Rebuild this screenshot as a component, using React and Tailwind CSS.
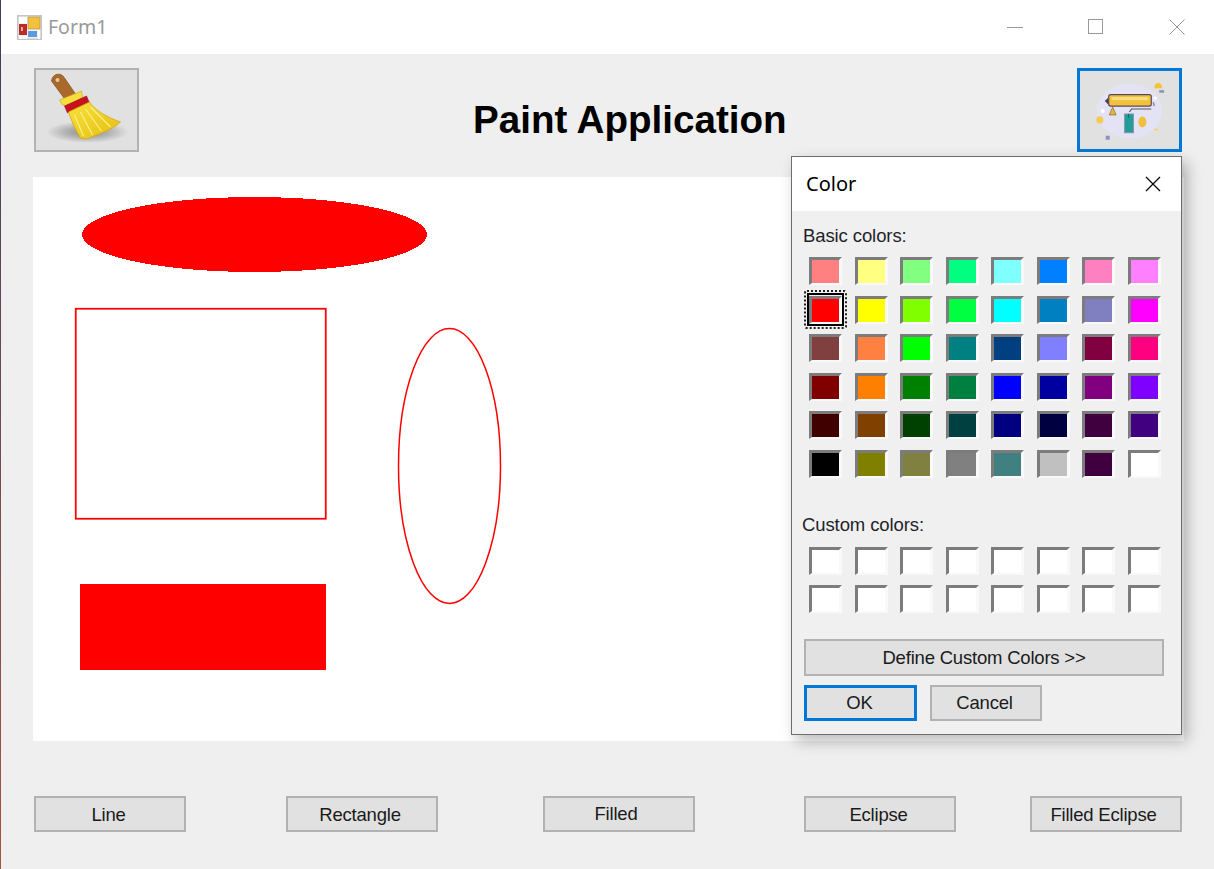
import { useState } from 'react';

const sans = 'font-["Liberation_Sans",Arial,sans-serif]';

const basicColors = [
    '#ff8080', '#ffff80', '#80ff80', '#00ff80', '#80ffff', '#0080ff', '#ff80c0', '#ff80ff',
    '#ff0000', '#ffff00', '#80ff00', '#00ff40', '#00ffff', '#0080c0', '#8080c0', '#ff00ff',
    '#804040', '#ff8040', '#00ff00', '#008080', '#004080', '#8080ff', '#800040', '#ff0080',
    '#800000', '#ff8000', '#008000', '#008040', '#0000ff', '#0000a0', '#800080', '#8000ff',
    '#400000', '#804000', '#004000', '#004040', '#000080', '#000040', '#400040', '#400080',
    '#000000', '#808000', '#808040', '#808080', '#408080', '#c0c0c0', '#400040', '#ffffff',
];

const toolButtons = [
    { label: 'Line', className: 'ml-[1px] pr-[3px] pt-[2px]' },
    { label: 'Rectangle', className: 'ml-[100px] pr-[4px] pt-[2px]' },
    { label: 'Filled', className: 'ml-[105px] pr-[6px] pb-[1px]' },
    { label: 'Eclipse', className: 'ml-[109px] pr-[3px] pt-[2px]' },
    { label: 'Filled Eclipse', className: 'ml-[74px] pr-[5px] pt-[2px]' },
];

const FormIcon = () => (
    <svg width="25" height="25" viewBox="0 0 25 25" className="blur-[0.4px]">
        <rect x="0.75" y="0.75" width="23.5" height="23.5" fill="#f4f4f4" stroke="#c4c4c4" strokeWidth="1.5" />
        <rect x="2" y="2" width="8" height="6" fill="#ffffff" />
        <rect x="11" y="2" width="12" height="12" fill="#f2c23e" stroke="#a88a3a" strokeWidth="0.6" />
        <rect x="2" y="9" width="8" height="11" fill="#bd2b25" />
        <rect x="4" y="12" width="2" height="4" fill="#e9a9a0" />
        <rect x="11" y="16" width="9" height="6" fill="#5c9be2" />
        <rect x="2" y="21" width="3" height="3" fill="#ffffff" />
        <rect x="6" y="21" width="4" height="3" fill="#ffffff" />
        <rect x="21" y="16" width="2" height="8" fill="#ffffff" />
    </svg>
);

const BroomIcon = () => (
    <svg width="101" height="80" viewBox="0 0 100 80" className="blur-[0.5px]">
        <defs>
            <radialGradient id="broomShadow">
                <stop offset="0%" stopColor="#8a8a8a" />
                <stop offset="55%" stopColor="#b4b4b4" />
                <stop offset="100%" stopColor="#e1e1e1" />
            </radialGradient>
            <linearGradient id="broomStraw" x1="0" y1="0" x2="1" y2="1">
                <stop offset="0%" stopColor="#f8e23c" />
                <stop offset="100%" stopColor="#e5bd12" />
            </linearGradient>
        </defs>
        <ellipse cx="51" cy="62" rx="41" ry="11" fill="url(#broomShadow)" />
        <path d="M15 11 C16 3 25 2 28 8 L39 24 L29 30 Z" fill="#a9692a" stroke="#8a5420" strokeWidth="0.8" />
        <circle cx="21" cy="10" r="2" fill="#e6c9a0" />
        <path d="M23 30 L45 21 L46 27 L41 31 L31 36 L26 35 Z" fill="#f5df3e" stroke="#c9a516" strokeWidth="0.6" />
        <path d="M28 36 L50 26 L53 33 L31 43 Z" fill="#c8121e" stroke="#97101a" strokeWidth="0.6" />
        <path d="M32 42 L53 32 C58 40 70 47 84 52 C76 60 62 64 50 69 L44 68 C39 60 35 51 32 42 Z" fill="url(#broomStraw)" stroke="#d0a813" strokeWidth="0.8" />
        <path d="M38 45 L47 66 M44 42 L56 65 M49 39 L65 61 M54 37 L74 57" stroke="#fbf08a" strokeWidth="1.2" fill="none" />
    </svg>
);

const RollerIcon = () => (
    <svg width="100" height="80" viewBox="0 0 100 80" className="blur-[0.5px]">
        <ellipse cx="50" cy="41" rx="33" ry="27.5" fill="#e3e3f5" />
        <path d="M25 31 L29 27 L29 35 Z" fill="#4e4048" />
        <rect x="29" y="24.5" width="43" height="11.5" rx="2" fill="#f2c23e" stroke="#5a4a50" strokeWidth="1.2" />
        <rect x="32" y="27" width="37" height="3" fill="#f9dd84" />
        <path d="M74 32 L75 36" stroke="#8f8a9a" strokeWidth="1.5" />
        <path d="M72 39 L52 39 L50 42" stroke="#5a5560" strokeWidth="1.2" fill="none" />
        <rect x="45" y="44" width="9" height="19" fill="#1f9e98" stroke="#8f93a6" strokeWidth="1" />
        <path d="M49 44 L49 48" stroke="#0f6d68" strokeWidth="1" />
        <path d="M33 37 L36.5 45 L29.5 45 Z" fill="#e8b53a" stroke="#6d5a3c" strokeWidth="0.6" />
        <ellipse cx="63" cy="52" rx="4" ry="5.5" fill="#f0bf3c" />
        <circle cx="20" cy="50" r="3.6" fill="#f5ca55" />
        <path d="M75 18 C75 11 83 11 83 18 Z" fill="#f3c434" />
        <rect x="80" y="20" width="5" height="2.5" fill="#8f8fb8" />
        <rect x="26" y="66" width="4" height="4" fill="#8f8fc4" />
        <rect x="75" y="59" width="4" height="1.6" fill="#f5d36a" />
        <circle cx="23" cy="41" r="2" fill="#ffffff" />
        <circle cx="76" cy="28" r="1.6" fill="#ffffff" />
    </svg>
);

const Swatch = ({ color, selected }) => (
    <div className="relative w-[33px] h-[28px]">
        <div
            className="w-full h-full box-border border-solid border-t-[3px] border-l-[3px] border-r-[3px] border-b-[2px] border-t-[#7c7c7c] border-l-[#7c7c7c] border-r-[#f9f9f9] border-b-[#f9f9f9]"
            style={{ backgroundColor: color }}
        />
        {selected && (
            <>
                <div className="absolute -left-[2px] -top-[3px] -right-[2px] -bottom-[2px] border-2 border-black" />
                <div className="absolute -left-[5px] -top-[6px] -right-[5px] -bottom-[5px] border-2 border-dotted border-[#222222] rounded-[3px]" />
            </>
        )}
    </div>
);

const WinButton = ({ children, className = '', focused = false }) => (
    <button
        className={`flex items-center justify-center bg-[#e1e1e1] text-[18.5px] text-[#1a1a1a] tracking-[-0.2px] ${sans} ${
            focused ? 'border-[3px] border-[#0078d7]' : 'border-2 border-[#b2b2b2]'
        } ${className}`}
    >
        {children}
    </button>
);

const ColorDialog = () => (
    <div className="absolute left-[791px] top-[156px] w-[391px] h-[579px] flex flex-col bg-[#f0f0f0] border border-[#6e6e6e] shadow-[5px_6px_14px_rgba(0,0,0,0.28)]">
        <div className="h-[54px] shrink-0 bg-white flex items-center justify-between pl-[14px] pr-[20px]">
            <span className='text-[20px] text-black font-["Noto_Sans",sans-serif]'>Color</span>
            <svg width="16" height="16" viewBox="0 0 16 16" stroke="#000" strokeWidth="1.2" fill="none">
                <path d="M1 1 L15 15 M15 1 L1 15" />
            </svg>
        </div>

        <div className="flex-1 flex flex-col pl-[11px]">
            <p className={`mt-[14px] h-[21px] leading-[21px] text-[18.5px] text-[#1f1f2a] tracking-[-0.1px] ${sans}`}>Basic colors:</p>
            <div className="mt-[11px] ml-[6px] grid grid-cols-[repeat(8,33px)] gap-x-[12.5px] gap-y-[10.5px]">
                {basicColors.map((color, i) => (
                    <Swatch key={i} color={color} selected={i === 8} />
                ))}
            </div>

            <p className={`mt-[36px] -ml-[1px] h-[21px] leading-[21px] text-[18.5px] text-[#1f1f2a] tracking-[-0.1px] ${sans}`}>Custom colors:</p>
            <div className="mt-[12px] ml-[6px] grid grid-cols-[repeat(8,33px)] gap-x-[12.5px] gap-y-[10px]">
                {Array.from({ length: 16 }).map((_, i) => (
                    <Swatch key={i} color="#ffffff" />
                ))}
            </div>

            <WinButton className="mt-[26px] ml-[1px] w-[360px] h-[37px] pt-[2px]">Define Custom Colors &gt;&gt;</WinButton>
            <div className="mt-[9px] ml-[1px] flex gap-[13px]">
                <WinButton focused className="w-[113px] h-[36px] pr-[2px] pt-[1px]">OK</WinButton>
                <WinButton className="w-[112px] h-[36px] pr-[3px] pt-[1px]">Cancel</WinButton>
            </div>
        </div>
    </div>
);

const App = () => {
    const [brushColor] = useState('#ff0000');

    return (
        <div className="relative w-[1214px] h-[869px] overflow-hidden flex bg-[#efefef]">
            {/* window edge */}
            <div className="w-px shrink-0 bg-linear-to-b from-[#3b3d5e] to-[#a5533f]" />

            <div className="flex-1 flex flex-col">
                {/* title bar */}
                <div className="h-[54px] shrink-0 bg-white flex items-center pl-[16px]">
                    <FormIcon />
                    <span className='ml-[6px] text-[19.5px] text-[#999999] font-["Noto_Sans",sans-serif]'>Form1</span>
                    <div className="ml-auto flex items-center">
                        <svg width="16" height="16" viewBox="0 0 16 16" stroke="#999999" fill="none" className="mr-[65px]">
                            <path d="M0 8.5 H16" />
                        </svg>
                        <svg width="16" height="16" viewBox="0 0 16 16" stroke="#999999" fill="none" className="mr-[65px]">
                            <rect x="0.5" y="0.5" width="14" height="14" />
                        </svg>
                        <svg width="16" height="16" viewBox="0 0 16 16" stroke="#999999" fill="none" className="mr-[29px]">
                            <path d="M0.5 0.5 L15.5 15.5 M15.5 0.5 L0.5 15.5" />
                        </svg>
                    </div>
                </div>

                {/* toolbar */}
                <div className="mt-[14px] flex items-center pl-[33px] pr-[32px]">
                    <button className="w-[105px] h-[84px] flex items-center justify-center bg-[#e1e1e1] border-2 border-[#b2b2b2]">
                        <BroomIcon />
                    </button>
                    <h1 className={`ml-[334px] mt-[20px] text-[38.6px] leading-none font-bold text-black whitespace-nowrap ${sans}`}>Paint Application</h1>
                    <button className="ml-auto w-[105px] h-[84px] flex items-center justify-center bg-[#e1e1e1] border-[3px] border-[#0078d7]">
                        <RollerIcon />
                    </button>
                </div>

                {/* drawing surface */}
                <div className="mt-[25px] ml-[32px] w-[1151px] h-[564px] bg-white">
                    <svg width="1151" height="564" viewBox="0 0 1151 564">
                        <ellipse cx="221.5" cy="57.5" rx="172.5" ry="37.5" fill={brushColor} shapeRendering="crispEdges" />
                        <rect x="42.75" y="131.75" width="250" height="210" fill="none" stroke={brushColor} strokeWidth="1.75" />
                        <ellipse cx="416.5" cy="289" rx="51" ry="137.5" fill="none" stroke={brushColor} strokeWidth="1.5" />
                        <rect x="47" y="407" width="246" height="86" fill={brushColor} />
                    </svg>
                </div>

                {/* shape buttons */}
                <div className="mt-[55px] flex pl-[32px]">
                    {toolButtons.map((btn) => (
                        <WinButton key={btn.label} className={`w-[152px] h-[36px] ${btn.className}`}>
                            {btn.label}
                        </WinButton>
                    ))}
                </div>
            </div>

            <ColorDialog />
        </div>
    );
};

export default App;
